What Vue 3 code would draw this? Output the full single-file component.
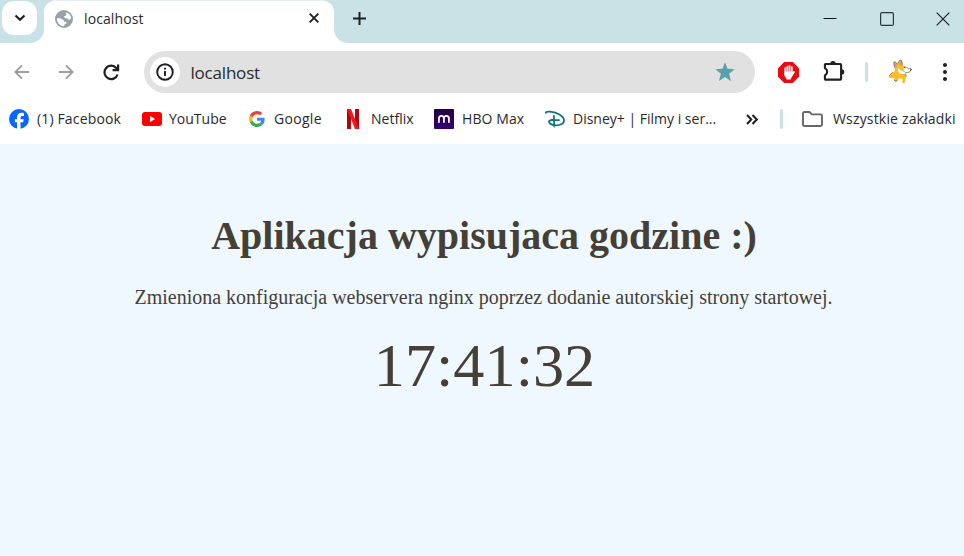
<script setup>
const bookmarks = [
  { id: 'facebook', label: '(1) Facebook' },
  { id: 'youtube', label: 'YouTube' },
  { id: 'google', label: 'Google' },
  { id: 'netflix', label: 'Netflix' },
  { id: 'hbo', label: 'HBO Max' },
  { id: 'disney', label: 'Disney+ | Filmy i ser...' },
]
</script>

<template>
  <div class="window">
    <header class="strip">
      <button class="search-tabs" aria-label="Karty">
        <svg width="12" height="8" viewBox="0 0 12 8"><path d="M1.500 1.500 6 5.800l4.500-4.300" fill="none" stroke="#1f2023" stroke-width="2.200" /></svg>
      </button>
      <div class="tab">
        <svg class="globe" width="18" height="18" viewBox="0 0 18 18">
          <circle cx="9" cy="9" r="9" fill="#9aa0a6" />
          <path d="M11 2.200C14 3 16 5.500 16.200 8.300L14.500 9.800 13 9.500 12.200 8.200H9.800L8.900 6.600 10.600 5.700 11.200 4.400Z" fill="#fff" />
          <path d="M1.900 8.200H5.500L8.700 10.200 9.200 11.700H11.400V13.500L9.600 14.200 9.200 16.200C5.200 16.300 1.800 13 1.900 8.200Z" fill="#fff" />
        </svg>
        <span class="tab-title">localhost</span>
        <svg class="tab-close" width="10" height="10" viewBox="0 0 10 10"><path d="m.7.7 8.600 8.600m0-8.600L.7 9.300" stroke="#1f2023" stroke-width="1.900" /></svg>
      </div>
      <svg class="new-tab" width="13" height="13" viewBox="0 0 13 13"><path d="M6.500 0v13M0 6.500h13" stroke="#1f2023" stroke-width="2" /></svg>
      <div class="controls">
        <svg width="14" height="14" viewBox="0 0 14 14"><path d="M.5 6.500h13" stroke="#111" /></svg>
        <svg width="14" height="14" viewBox="0 0 14 14"><rect x=".6" y=".6" width="12.800" height="12.800" rx="1.500" fill="none" stroke="#26383b" stroke-width="1.200" /></svg>
        <svg width="14" height="14" viewBox="0 0 14 14"><path d="m.7.7 12.600 12.600m0-12.600L.7 13.300" stroke="#172325" stroke-width="1.200" /></svg>
      </div>
    </header>

    <div class="toolbar">
      <svg class="nav" width="16" height="16" viewBox="0 0 16 16"><path d="M15 8H1.500M8 1.300 1.300 8 8 14.700" fill="none" stroke="#9b9c9e" stroke-width="1.900" /></svg>
      <svg class="nav" width="16" height="16" viewBox="0 0 16 16"><path d="M1 8H14.500M8 1.300 14.700 8 8 14.700" fill="none" stroke="#9b9c9e" stroke-width="1.900" /></svg>
      <svg class="reload" width="17" height="17" viewBox="0 0 17 17"><path d="M14.600 10.500A6.700 6.700 0 1 1 13.200 3.900L15 5.700" fill="none" stroke="#1f2023" stroke-width="2.200" /><path d="M16.200 .6v6.600H9.600V5.100H14V.6z" fill="#1f2023" /></svg>
      <div class="address">
        <span class="info">
          <svg width="18" height="18" viewBox="0 0 18 18"><circle cx="9" cy="9" r="7.800" fill="none" stroke="#1f2023" stroke-width="1.900" /><path d="M9 7.900v5M9 4.700v1.900" stroke="#1f2023" stroke-width="1.900" /></svg>
        </span>
        <span class="url">localhost</span>
        <svg class="star" width="20" height="20" viewBox="0 0 20 20"><path d="m10 .3 2.500 6.500 7.200.4-5.600 4.500 1.900 7.300L10 15.100 4 19l1.900-7.300L.3 7.200l7.200-.4z" fill="#5a9fab" /></svg>
      </div>
      <svg class="adblock" width="21" height="21" viewBox="0 0 21 21">
        <path d="M6.200 0h8.600L21 6.200v8.600L14.800 21H6.200L0 14.800V6.200z" fill="#e50d12" />
        <path d="M7.200 12V6.200M9.400 10V4.500M11.600 10V3.800M13.800 11V5.200M14 13l2-3" stroke="#fff" stroke-width="1.700" stroke-linecap="round" />
        <path d="M6.400 9.500h8.200v3.700l-2 4.300H8.900l-2.500-3.800z" fill="#fff" />
      </svg>
      <svg class="puzzle" width="22" height="22" viewBox="0 0 22 22">
        <path d="M2.700 4h14.600q.8 0 .8.800v14q0 .8-.8.800H2.700q-.8 0-.8-.8v-3.300q2.300-1.200 2.300-3.700t-2.300-3.700V4.800q0-.8.800-.8z" fill="none" stroke="#1f2023" stroke-width="2.100" stroke-linejoin="round" />
        <path d="M7.300 3.500a2.700 2.600 0 0 1 5.400 0zM18.700 9.200a2.600 2.700 0 0 1 0 5.400z" fill="#1f2023" />
      </svg>
      <i class="divider"></i>
      <svg class="avatar" width="24" height="26" viewBox="0 0 24 26">
        <path d="M6 3 7.500 2.800 9 6 11.800 1 13.800 1.700 14.500 6.500 17.500 7.200 19 10 17 14 18.500 18 17.200 20.500 16.500 24.500 14 23.800 15 20 10.500 19.500 9.500 22 7.500 22.500 5.800 21 6.500 19 1.500 19 .8 17 4.500 13.500 7 12 6.500 8z" fill="#fbbc2c" />
        <path d="M5.800 3.500 8 4.500 9.300 8 7 9z" fill="#c9a39b" />
        <path d="m10.500 6 2-4.200 1 .5.500 4.200" fill="#e0a45a" />
        <path d="M16 8.500 22.800 10.200 21.300 13 17.500 13.600 15.500 11zM10 9l2.800 2.600 4.700 2-1.200 1.500-4-.2-2.500-2.400z" fill="#fff" />
        <path d="m6.500 8.200-.8-5 1.500-.5L9.200 5.300l2.800-4.300 1.800.7.500 4.600M18.500 8.500l4.700 1.800-1.800 2.900-4 .4M4.700 13.200 1.300 16.500M6 21.200l1.800 1.100 1.600-.8M17.500 14.500l.7 3" fill="none" stroke="#655643" stroke-width=".7" />
        <path d="M16 8.300h1.300M22.200 9.800l1.300.8-.8 1" fill="none" stroke="#3d3936" />
      </svg>
      <svg class="more" width="4" height="18" viewBox="0 0 4 18" fill="#1f2023"><circle cx="2" cy="2" r="2" /><circle cx="2" cy="9" r="2" /><circle cx="2" cy="16" r="2" /></svg>
    </div>

    <nav class="bookmarks">
      <div v-for="b in bookmarks" :key="b.id" class="bookmark" :class="b.id">
        <svg v-if="b.id === 'facebook'" width="20" height="20" viewBox="0 0 20 20"><circle cx="10" cy="10" r="10" fill="#0866ff" /><path d="M8 20v-6.700H5.900v-3.100H8V8.800c0-3.400 1.600-5 4.900-5 .6 0 1.700.1 2.100.2V6.900h-1.300c-1.600 0-2.200.6-2.200 2.200v1.100h3.200l-.6 3.100h-2.600V20z" fill="#fff" /></svg>
        <svg v-else-if="b.id === 'youtube'" width="20" height="20" viewBox="0 0 20 20"><rect y="3" width="20" height="14" rx="3" fill="#f00" /><path d="m8 7 5.200 3L8 13z" fill="#fff" /></svg>
        <svg v-else-if="b.id === 'google'" width="16" height="16" viewBox="0 0 48 48">
          <path fill="#EA4335" d="M24 9.500c3.540 0 6.710 1.220 9.210 3.600l6.850-6.850C35.900 2.380 30.470 0 24 0 14.620 0 6.510 5.380 2.560 13.220l7.980 6.190C12.430 13.720 17.740 9.500 24 9.500z" />
          <path fill="#4285F4" d="M46.980 24.550c0-1.570-.15-3.090-.38-4.550H24v9.020h12.940c-.58 2.960-2.260 5.480-4.780 7.180l7.730 6c4.510-4.180 7.090-10.360 7.090-17.650z" />
          <path fill="#FBBC05" d="M10.530 28.590c-.48-1.450-.76-2.990-.76-4.590s.27-3.140.76-4.590l-7.980-6.190C.92 16.460 0 20.120 0 24c0 3.880.92 7.540 2.560 10.780z" />
          <path fill="#34A853" d="M24 48c6.480 0 11.930-2.130 15.890-5.810l-7.730-6c-2.150 1.450-4.920 2.300-8.160 2.300-6.260 0-11.570-4.220-13.470-9.910l-7.980 6.190C6.510 42.620 14.620 48 24 48z" />
        </svg>
        <svg v-else-if="b.id === 'netflix'" width="12" height="20" viewBox="0 0 12 20"><path d="M0 0h4v20H0zM8 0h4v20H8z" fill="#b1060f" /><path d="M0 0h4l8 20H8z" fill="#ed1823" /></svg>
        <svg v-else-if="b.id === 'hbo'" width="20" height="20" viewBox="0 0 20 20">
          <defs><linearGradient id="plum" x1="0" y1="0" x2="0" y2="1"><stop stop-color="#200040" /><stop offset="1" stop-color="#36006e" /></linearGradient></defs>
          <rect width="20" height="20" rx="1" fill="url(#plum)" /><path d="M4.900 13.700V9.500c0-3.500 5-3.500 5 0v4.200M9.900 9.500c0-3.500 5-3.500 5 0v4.200" fill="none" stroke="#fff" stroke-width="1.800" />
        </svg>
        <svg v-else width="20" height="20" viewBox="0 0 20 20"><path d="M.7 3.900C.9 2.700 3 2.500 5 2.700c7.500.7 14 4.400 14 9 0 3.300-4.300 4.800-8 4.600-4-.2-7-1.800-7-3.500 0-1.800 4-2.500 10-1.600M8.900 7l.3 10.500" fill="none" stroke="#17717f" stroke-width="1.800" stroke-linecap="round" /></svg>
        <span>{{ b.label }}</span>
      </div>
      <svg class="overflow" width="12" height="11" viewBox="0 0 12 11"><path d="m1 1 4.300 4.500L1 10m5.500-9 4.300 4.500L6.500 10" fill="none" stroke="#1f2023" stroke-width="2" /></svg>
      <i class="divider"></i>
      <div class="bookmark all">
        <svg width="21" height="16" viewBox="0 0 21 16"><path d="M1 2.500Q1 1 2.500 1h5l2.300 2.400h8.700q1.500 0 1.500 1.500v8.600q0 1.500-1.500 1.500h-16Q1 15 1 13.500z" fill="none" stroke="#656769" stroke-width="1.900" /></svg>
        <span>Wszystkie zakładki</span>
      </div>
    </nav>

    <main class="page">
      <h1>Aplikacja wypisujaca godzine :)</h1>
      <p>Zmieniona konfiguracja webservera nginx poprzez dodanie autorskiej strony startowej.</p>
      <time>17:41:32</time>
    </main>
  </div>
</template>

<style>
body { margin: 0; }
</style>

<style scoped>
.window {
  display: flex;
  flex-direction: column;
  width: 964px;
  height: 556px;
  overflow: hidden;
  background: #fff;
  color: #292a2d;
  font-family: "Open Sans", "Noto Sans", sans-serif;
}
svg { display: block; flex: none; }
.strip {
  display: flex;
  align-items: flex-start;
  height: 43px;
  background: #c9e2e5;
}
.search-tabs {
  display: grid;
  place-items: center;
  width: 35px;
  height: 34px;
  margin: 1px 7px 0 2px;
  padding: 0;
  border: 0;
  border-radius: 12px;
  background: #fff;
}
.tab {
  position: relative;
  display: flex;
  align-items: center;
  width: 290px;
  height: 36px;
  padding-bottom: 6px;
  border-top: 1px solid #e4f0f2;
  border-radius: 12px 12px 0 0;
  background: #fff;
}
.tab::before,
.tab::after {
  content: "";
  position: absolute;
  bottom: 0;
  width: 14px;
  height: 14px;
}
.tab::before { left: -14px; background: radial-gradient(circle at 0 0, transparent 13.500px, #fff 14.500px); }
.tab::after { right: -14px; background: radial-gradient(circle at 100% 0, transparent 13.500px, #fff 14.500px); }
.globe { margin: -1px 0 0 11px; }
.tab-title { margin: -2px 0 0 11px; font-size: 14px; letter-spacing: 0.100px; }
.tab-close { margin: -2px 15px 0 auto; }
.new-tab { margin: 12px 0 0 19px; }
.controls { display: flex; gap: 43px; margin: 12px 14px 0 auto; }
.controls svg:nth-child(2) { margin-right: -1px; }

.toolbar { display: flex; align-items: center; height: 58px; }
.nav:first-child { margin-left: 14px; }
.nav + .nav { margin-left: 28px; }
.reload { margin-left: 29px; }
.address {
  display: flex;
  align-items: center;
  width: 611px;
  height: 42px;
  margin-left: 24px;
  border-radius: 21px;
  background: #e1e1e1;
}
.info {
  display: grid;
  place-items: center;
  width: 30px;
  height: 30px;
  margin-left: 6px;
  border-radius: 50%;
  background: #fff;
}
.url { margin-left: 10.500px; font-size: 17px; letter-spacing: -0.200px; }
.star { margin: 0 20px 0 auto; }
.adblock { margin-left: 23px; }
.puzzle { margin: -2px 0 0 24px; }
.divider { width: 3px; height: 20px; border-radius: 2px; background: #c9e2e5; }
.toolbar .divider { margin-left: 20px; }
.avatar { margin-left: 20px; }
.more { margin-left: 31px; }

.bookmarks { display: flex; align-items: center; height: 43px; }
.bookmark {
  display: flex;
  align-items: center;
  gap: 8px;
  height: 36px;
  margin-bottom: 7px;
  font-size: 14px;
  white-space: nowrap;
}
.bookmark span { flex: none; margin-top: -2px; }
.facebook { width: 133px; margin-left: 9px; letter-spacing: 0.150px; }
.youtube { width: 107px; gap: 7px; }
.google { width: 98px; gap: 9px; letter-spacing: 0.300px; }
.netflix { width: 87px; gap: 12px; }
.hbo { width: 111px; letter-spacing: 0.100px; }
.disney { width: 201px; }
.overflow { margin-bottom: 7px; }
.bookmarks .divider { margin: 0 19px 7px 22px; }
.all { gap: 10px; letter-spacing: 0.170px; }

.page {
  flex: 1;
  display: flex;
  flex-direction: column;
  align-items: center;
  background: #eff7ff;
  color: #453f35;
  font-family: "Liberation Serif", serif;
  white-space: nowrap;
}
h1 {
  margin: 69px 0 0 4px;
  font-size: 40px;
  line-height: 46px;
}
p { margin: 26px 0 0 3px; font-size: 20px; line-height: 24px; }
time { margin: 19px 0 0 5px; font-size: 62.300px; line-height: 74px; }
</style>
